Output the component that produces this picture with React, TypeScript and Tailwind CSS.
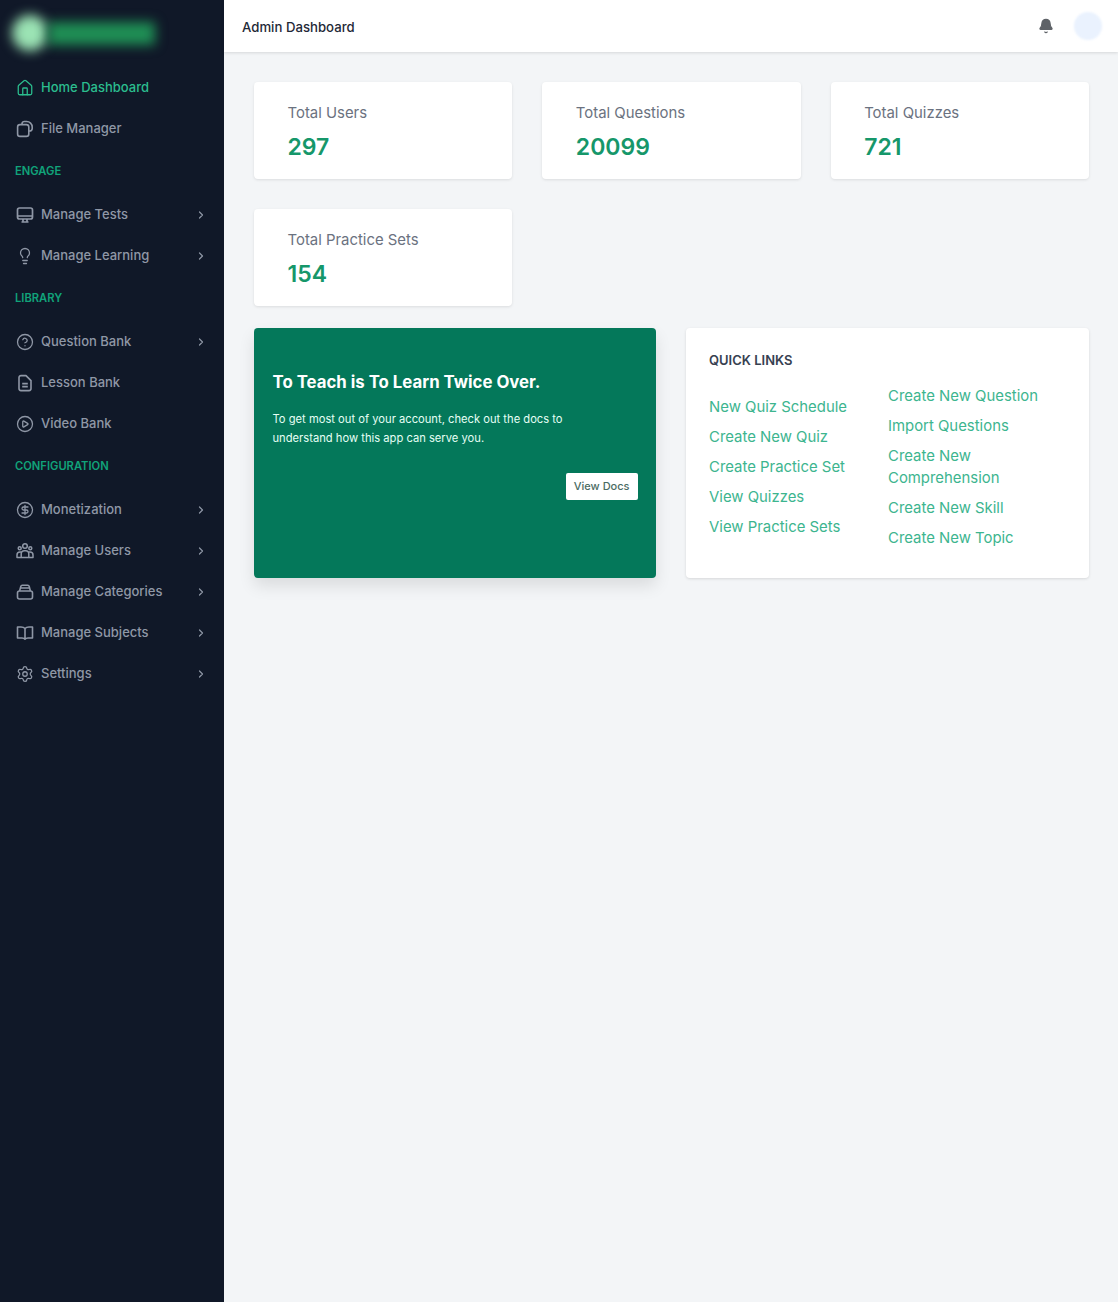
import { ChevronRight, House, Lightbulb, CircleHelp, CirclePlay, CircleDollarSign, Settings, Bell } from "lucide-react";
import type { ReactNode } from "react";

const FilesIcon = () => (
  <svg width="18" height="18" viewBox="0 0 18 18" fill="none" stroke="currentColor" strokeWidth="1.6" strokeLinejoin="round">
    <path d="M6 4.2V3.6a2.4 2.4 0 0 1 2.4-2.1h2.2a5.5 5.5 0 0 1 5.6 5.5v1.6a2.6 2.6 0 0 1-2.6 2.4h-.6" />
    <rect x="1.6" y="4.6" width="11.2" height="11.8" rx="2.4" />
  </svg>
);

const MonitorIcon = () => (
  <svg width="18" height="18" viewBox="0 0 18 18" fill="none" stroke="currentColor" strokeWidth="1.7" strokeLinejoin="round">
    <rect x="1.5" y="2" width="15" height="11" rx="2" />
    <path d="M1.5 10h15M7 13v3h4v-3M5.5 16h7" />
  </svg>
);

const LessonIcon = () => (
  <svg width="18" height="18" viewBox="0 0 18 18" fill="none" stroke="currentColor" strokeWidth="1.6" strokeLinejoin="round">
    <path d="M3 3.6a2 2 0 0 1 2-2h5l5 5v8a2 2 0 0 1-2 2H5a2 2 0 0 1-2-2z" />
    <path d="M6.2 9.6h5.6M6.2 12.6h5.6" />
  </svg>
);

const BookIcon = () => (
  <svg width="18" height="18" viewBox="0 0 18 18" fill="none" stroke="currentColor" strokeWidth="1.6" strokeLinejoin="round">
    <path d="M9 4.5C8 3.4 6.6 3 5 3H1.5v11H6c1.3 0 2.4.4 3 1.2.6-.8 1.7-1.2 3-1.2h4.500V3H13c-1.600 0-3 .4-4 1.500zM9 4.500v10.700" />
  </svg>
);

const UsersIcon = () => (
  <svg width="18" height="18" viewBox="0 0 18 18" fill="none" stroke="currentColor" strokeWidth="1.5">
    <circle cx="9" cy="4" r="2.3" />
    <circle cx="3.7" cy="6.2" r="1.5" />
    <circle cx="14.3" cy="6.2" r="1.5" />
    <path d="M5.2 15.5V11.5a3 3 0 0 1 3-2.8h1.6a3 3 0 0 1 3 2.8v4z" strokeLinejoin="round" />
    <path d="M5.2 15.5H1v-2.6a3 3 0 0 1 3-3h1.4M12.8 15.5H17v-2.6a3 3 0 0 0-3-3h-1.4" strokeLinejoin="round" />
  </svg>
);

const CategoryIcon = () => (
  <svg width="18" height="18" viewBox="0 0 18 18" fill="none" stroke="currentColor" strokeWidth="1.6" strokeLinejoin="round">
    <rect x="1.5" y="8" width="15" height="8" rx="2" />
    <path d="M3.6 8l1.200-4.600a1.600 1.600 0 0 1 1.500-1.200h5.400a1.600 1.600 0 0 1 1.500 1.200L14.400 8M4.600 5h8.800" />
  </svg>
);

type Row = { label: string; icon: ReactNode; chevron?: boolean };

const ico = { size: 18, strokeWidth: 1.7 };

const sections: { title?: string; rows: Row[] }[] = [
  {
    rows: [
      { label: "Home Dashboard", icon: <House {...ico} /> },
      { label: "File Manager", icon: <FilesIcon /> },
    ],
  },
  {
    title: "ENGAGE",
    rows: [
      { label: "Manage Tests", icon: <MonitorIcon />, chevron: true },
      { label: "Manage Learning", icon: <Lightbulb {...ico} />, chevron: true },
    ],
  },
  {
    title: "LIBRARY",
    rows: [
      { label: "Question Bank", icon: <CircleHelp {...ico} />, chevron: true },
      { label: "Lesson Bank", icon: <LessonIcon /> },
      { label: "Video Bank", icon: <CirclePlay {...ico} /> },
    ],
  },
  {
    title: "CONFIGURATION",
    rows: [
      { label: "Monetization", icon: <CircleDollarSign {...ico} />, chevron: true },
      { label: "Manage Users", icon: <UsersIcon />, chevron: true },
      { label: "Manage Categories", icon: <CategoryIcon />, chevron: true },
      { label: "Manage Subjects", icon: <BookIcon />, chevron: true },
      { label: "Settings", icon: <Settings {...ico} />, chevron: true },
    ],
  },
];

const stats = [
  { label: "Total Users", value: "297" },
  { label: "Total Questions", value: "20099" },
  { label: "Total Quizzes", value: "721" },
  { label: "Total Practice Sets", value: "154" },
];

const leftLinks = ["New Quiz Schedule", "Create New Quiz", "Create Practice Set", "View Quizzes", "View Practice Sets"];
const rightLinks = ["Create New Question", "Import Questions", "Create New Comprehension", "Create New Skill", "Create New Topic"];

function Sidebar() {
  return (
    <aside className="w-[224px] shrink-0 bg-[#101828]">
      <div className="flex h-[67px] items-start pl-[12px] pt-[15px]">
        <div className="h-[36px] w-[36px] shrink-0 rounded-full bg-[#9be3b4] blur-[6px]" />
        <div className="mt-[7px] h-[23px] w-[107px] bg-[#1f8f55] blur-[6px]" />
      </div>
      {sections.map((s, i) => (
        <div key={i}>
          {s.title && (
            <div className="flex h-[45px] items-center pl-[15px] text-[11.200px] font-semibold text-[#10a37a]">{s.title}</div>
          )}
          {s.rows.map((r) => (
            <div
              key={r.label}
              className={`flex h-[41px] items-center pl-[15.500px] pr-[17px] text-[13px] font-medium ${
                r.label === "Home Dashboard" ? "text-[#2bbd8e]" : "text-[#8f97a6]"
              }`}
            >
              <span className="flex w-[25.500px] shrink-0">{r.icon}</span>
              <span className="flex-1">{r.label}</span>
              {r.chevron && <ChevronRight size={12} strokeWidth={2.4} />}
            </div>
          ))}
        </div>
      ))}
    </aside>
  );
}

export default function App() {
  return (
    <div className="flex min-h-[1302px] font-['Inter',sans-serif]">
      <Sidebar />
      <div className="flex-1 bg-[#f3f5f7]">
        <header className="flex h-[52px] items-center justify-between bg-white pl-[18px] pr-[16px] shadow-[0_1px_3px_rgba(0,0,0,0.12)]">
          <span className="pt-[4px] text-[13.200px] font-medium text-[#1f2937]">Admin Dashboard</span>
          <div className="flex items-center gap-[20px]">
            <Bell size={16} fill="#5f6368" stroke="#5f6368" />
            <div className="h-[28px] w-[28px] rounded-full bg-[#eaf2fe] blur-[1px]" />
          </div>
        </header>
        <main className="pl-[30px] pr-[29px] pt-[30px]">
          <div className="grid grid-cols-3 gap-[30px]">
            {stats.map((s) => (
              <div key={s.label} className="h-[97px] rounded-[4px] bg-white px-[33.500px] pt-[19.500px] shadow-[0_1px_3px_rgba(0,0,0,0.1)]">
                <div className="text-[14.900px] leading-[22px] text-[#6b7280]">{s.label}</div>
                <div className="mt-[7.500px] text-[23px] font-semibold leading-[32px] text-[#16976a]">{s.value}</div>
              </div>
            ))}
          </div>
          <div className="mt-[22px] grid grid-cols-[402px_1fr] gap-[30px]">
            <div className="h-[250px] rounded-[4px] bg-[#04785a] px-[18.500px] pt-[42px] shadow-[0_8px_16px_rgba(0,0,0,0.1)]">
              <h2 className="text-[16.800px] font-bold leading-[24px] text-white">To Teach is To Learn Twice Over.</h2>
              <p className="mt-[16px] max-w-[330px] text-[11.200px] leading-[19px] text-[#e6fff5]">
                To get most out of your account, check out the docs to understand how this app can serve you.
              </p>
              <div className="mt-[25px] flex justify-end">
                <button className="h-[27px] rounded-[2px] bg-white px-[8px] text-[11px] font-medium text-[#4b6b63]">View Docs</button>
              </div>
            </div>
            <div className="h-[250px] rounded-[4px] bg-white pl-[23px] pt-[23px] shadow-[0_1px_3px_rgba(0,0,0,0.12)]">
              <h3 className="text-[13px] font-semibold leading-[18px] text-[#374151]">QUICK LINKS</h3>
              <div className="mt-[16px] flex items-center text-[14.900px] leading-[22px] text-[#3db58f]">
                <div className="flex w-[179px] shrink-0 flex-col gap-[8px]">
                  {leftLinks.map((l) => (
                    <a key={l}>{l}</a>
                  ))}
                </div>
                <div className="flex w-[170px] flex-col gap-[8px]">
                  {rightLinks.map((l) => (
                    <a key={l}>{l}</a>
                  ))}
                </div>
              </div>
            </div>
          </div>
        </main>
      </div>
    </div>
  );
}
